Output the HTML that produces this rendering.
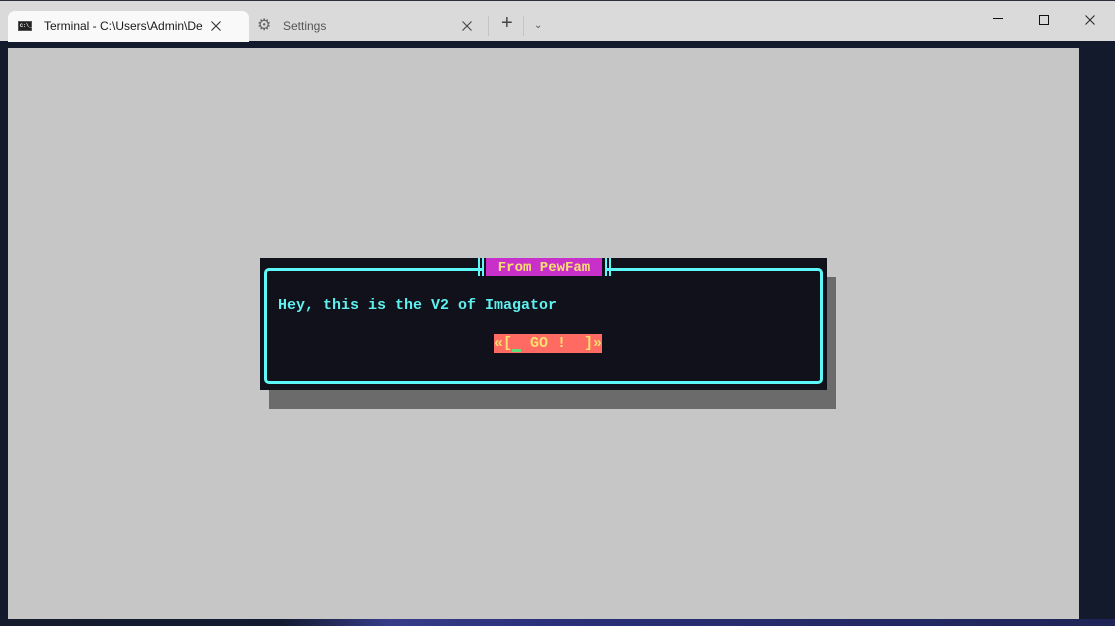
<!DOCTYPE html>
<html><head><style>
*{margin:0;padding:0;box-sizing:border-box}
body{width:1115px;height:626px;overflow:hidden;background:#121a2c;position:relative;font-family:"Liberation Sans",sans-serif}
.tb{position:absolute;left:0;top:0;width:1115px;height:41px;background:#dadada;border-top:1px solid #2a2f3a}
.tab{position:absolute;left:8px;top:10px;width:241px;height:31px;background:#f9f9f9;border-radius:7px 7px 0 0}
.t{position:absolute;font-size:12px;color:#1a1a1a;top:18px}
.x{position:absolute;width:10px;height:10px}
.gray{position:absolute;left:8px;top:48px;width:1071px;height:571px;background:#c6c6c6}
.bottom{position:absolute;left:0;top:619px;width:1115px;height:7px;background:linear-gradient(90deg,#161c2c 0%,#131a30 25%,#363c88 35%,#2a2f78 50%,#1e2456 100%)}
.shadow{position:absolute;left:269px;top:277px;width:567px;height:132px;background:#6b6b6b}
.box{position:absolute;left:260px;top:258px;width:567px;height:132px;background:#10111a}
.fr{position:absolute;left:4px;top:10px;width:559px;height:116px;border:3px solid #5ff8f8;border-radius:5px}
.lbl{position:absolute;left:226px;top:0;width:116px;height:18px;background:#c930c9;color:#f7e06e;font:bold 14px/20px "Liberation Mono",monospace;text-align:center}
.bar{position:absolute;top:0;width:2px;height:18px;background:#5ff8f8}
.m{position:absolute;font:bold 15px/20px "Liberation Mono",monospace;white-space:pre}
</style></head><body>
<div class="tb">
 <div class="tab"></div>
 <div style="position:absolute;left:18px;top:20px;width:14px;height:10px;background:#222;border:1px solid #555"><div style="font:bold 5px/6px 'Liberation Mono';color:#fff;margin:1px">C:\_</div></div>
 <div class="t" style="left:44px">Terminal - C:\Users\Admin\De</div>
 <svg class="x" style="left:211px;top:20px" viewBox="0 0 10 10"><path d="M0.5 0.5L9.5 9.5M9.5 0.5L0.5 9.5" stroke="#333" stroke-width="1.1"/></svg>
 <div class="t" style="left:257px;font-size:16px;top:14px;color:#666">⚙</div>
 <div class="t" style="left:283px;color:#555">Settings</div>
 <svg class="x" style="left:462px;top:20px" viewBox="0 0 10 10"><path d="M0.5 0.5L9.5 9.5M9.5 0.5L0.5 9.5" stroke="#444" stroke-width="1.1"/></svg>
 <div style="position:absolute;left:488px;top:15px;width:1px;height:20px;background:#c4c4c4"></div>
 <div class="t" style="left:501px;font-size:20px;top:11px;color:#444">+</div>
 <div style="position:absolute;left:523px;top:15px;width:1px;height:20px;background:#c4c4c4"></div>
 <div class="t" style="left:534px;font-size:10px;top:19px;color:#555">⌄</div>
 <div style="position:absolute;left:993px;top:17px;width:10px;height:1px;background:#111"></div>
 <div style="position:absolute;left:1039px;top:14px;width:10px;height:10px;border:1px solid #111"></div>
 <svg class="x" style="left:1085px;top:14px" viewBox="0 0 10 10"><path d="M0.5 0.5L9.5 9.5M9.5 0.5L0.5 9.5" stroke="#222" stroke-width="1"/></svg>
</div>
<div class="gray"></div>
<div class="bottom"></div>
<div class="shadow"></div>
<div class="box">
 <div class="fr"></div>
 <div style="position:absolute;left:222px;top:0;width:124px;height:18px;background:#10111a"></div>
 <div class="bar" style="left:218px"></div><div class="bar" style="left:222px"></div>
 <div class="bar" style="left:345px"></div><div class="bar" style="left:349px"></div>
 <div class="lbl">From PewFam</div>
 <div class="m" style="left:18px;top:38px;color:#5ff0f0">Hey, this is the V2 of Imagator</div>
 <div class="m" style="left:234px;top:76px;width:108px;height:19px;background:#ff6b63;color:#f7e06e;line-height:20px">«[  GO !  ]»</div>
 <div style="position:absolute;left:252px;top:91px;width:9px;height:3px;background:#5fe07a"></div>
</div>
</body></html>
